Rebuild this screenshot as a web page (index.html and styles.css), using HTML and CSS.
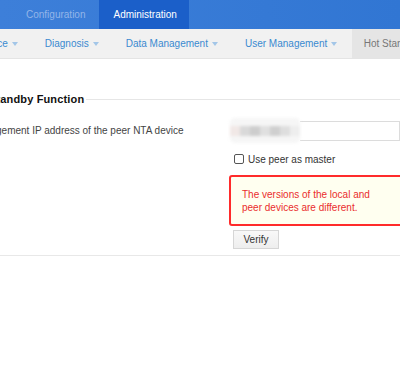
FILE: index.html
```html
<!DOCTYPE html>
<html>
<head>
<meta charset="utf-8">
<link rel="stylesheet" href="styles.css">
</head>
<body>
<div class="topbar">
  <div class="tab">Configuration</div>
  <div class="tab active">Administration</div>
</div>
<div class="subnav">
  <div class="item">Maintenance<span class="caret"></span></div>
  <div class="item">Diagnosis<span class="caret"></span></div>
  <div class="item">Data Management<span class="caret"></span></div>
  <div class="item">User Management<span class="caret"></span></div>
  <div class="item current">Hot Standby</div>
</div>
<div class="content">
  <div class="legend">
    <span class="legend-title">Hot Standby Function</span>
    <span class="legend-line"></span>
  </div>
  <div class="row row-ip">
    <div class="label">Management IP address of the peer NTA device</div>
    <div class="value ip-field">
      <span class="ip-blur"><span class="b1"></span><span class="b2"></span><span class="b3"></span><span class="b4"></span><span class="b5"></span><span class="b6"></span><span class="b7"></span></span>
      <span class="ip-input"></span>
    </div>
  </div>
  <div class="row row-check">
    <div class="label"></div>
    <div class="value">
      <label class="check"><span class="box"></span>Use peer as master</label>
    </div>
  </div>
  <div class="row row-error">
    <div class="label"></div>
    <div class="value">
      <div class="error">The versions of the local and peer devices are different.</div>
    </div>
  </div>
  <div class="row row-btn">
    <div class="label"></div>
    <div class="value">
      <div class="btn">Verify</div>
    </div>
  </div>
</div>
<div class="bottom-line"></div>
</body>
</html>
```
FILE: styles.css
```css
html, body {
  margin: 0;
  padding: 0;
  background: #fff;
  overflow: hidden;
  width: 400px;
  height: 375px;
  font-family: "Liberation Sans", Arial, sans-serif;
  font-size: 10px;
  color: #333;
}

.topbar {
  height: 29px;
  display: flex;
  padding-left: 12px;
  background: linear-gradient(to right, #3d7fd9, #3176d3);
}
.tab {
  padding: 0 14px;
  line-height: 29px;
  font-size: 10px;
  color: #93b5e8;
}
.tab.active {
  background: #1b5fc9;
  color: #fff;
  width: 62px;
}

.subnav {
  height: 29px;
  display: flex;
  background: #f1f1f1;
  border-bottom: 1px solid #e4e4e4;
  margin-left: -63px;
}
.item {
  padding: 0 13.5px;
  line-height: 29px;
  color: #3a8ad0;
  white-space: nowrap;
  display: flex;
  align-items: center;
}
.caret {
  display: inline-block;
  width: 0;
  height: 0;
  margin-left: 4px;
  margin-top: 1px;
  border-left: 3.5px solid transparent;
  border-right: 3.5px solid transparent;
  border-top: 4px solid #a3c6e8;
}
.item.current {
  margin-left: 1px;
  padding: 0 12px;
  background: #e5e5e5;
  color: #777;
}

.content {
  margin-left: -33px;
  margin-top: 33px;
}
.legend {
  display: flex;
  align-items: center;
  height: 14px;
}
.legend-title {
  font-size: 11px;
  font-weight: bold;
  color: #111;
  white-space: nowrap;
  letter-spacing: 0.15px;
}
.legend-line {
  flex: 1;
  height: 1px;
  background: #e6e6e6;
  margin-left: 2px;
  margin-top: 1px;
}

.row {
  display: flex;
  align-items: center;
}
.label {
  width: 263px;
  padding-left: 4px;
  box-sizing: border-box;
  color: #444;
  white-space: nowrap;
  flex: none;
}
.value {
  flex: 1;
}
.row-ip {
  margin-top: 12px;
  height: 25px;
}
.ip-field {
  display: flex;
  align-items: center;
}
.ip-blur {
  display: flex;
  flex-wrap: wrap;
  width: 70px;
  height: 25px;
  filter: blur(1.5px);
  border-radius: 5px;
  overflow: hidden;
  background: #f6f6f6;
  align-content: center;
}
.ip-blur span {
  width: 10px;
  height: 10px;
}
.b1 { background: #f1e8e6; }
.b2 { background: #d9d9d9; }
.b3 { background: #cdcdcd; }
.b4 { background: #e0e0e0; }
.b5 { background: #cfcfcf; }
.b6 { background: #dedede; }
.b7 { background: #eeeeee; }
.ip-input {
  flex: 1;
  height: 18px;
  border: 1px solid #dcdcdc;
  border-left: none;
  background: #fff;
}

.row-check {
  margin-top: 9px;
}
.check {
  display: flex;
  align-items: center;
  color: #333;
  margin-left: 4px;
  height: 14px;
}
.box {
  width: 8px;
  height: 8px;
  border: 1px solid #555;
  border-radius: 2px;
  margin-right: 4px;
  background: #fff;
}

.row-error {
  margin-top: 9px;
}
.error {
  width: 145px;
  padding: 11px 60px 10px 11px;
  border: 2px solid #ff2b2b;
  border-radius: 3px;
  background: #fffff0;
  color: #ea2d2d;
  line-height: 13px;
  margin-left: -1px;
}

.row-btn {
  margin-top: 4px;
}
.btn {
  width: 44px;
  height: 17px;
  line-height: 17px;
  text-align: center;
  border: 1px solid #d6d6d6;
  background: linear-gradient(#f8f8f8, #eeeeee);
  color: #333;
  margin-left: 3px;
}

.bottom-line {
  margin-top: 6px;
  height: 1px;
  background: #e8e8e8;
}
```
